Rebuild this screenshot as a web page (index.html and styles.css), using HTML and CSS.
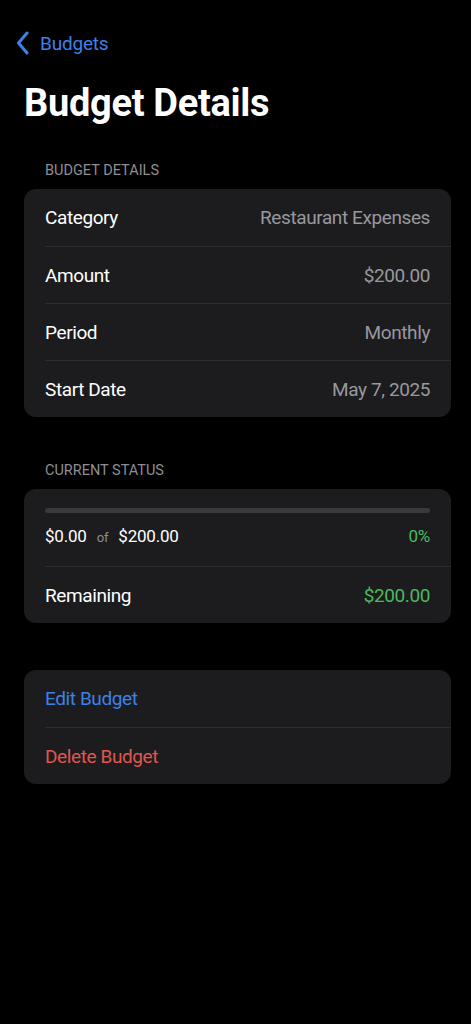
FILE: index.html
```html
<!DOCTYPE html>
<html lang="en">
<head>
  <meta charset="UTF-8">
  <meta name="viewport" content="width=device-width, initial-scale=1.0">
  <title>Budget Details</title>
  <link rel="stylesheet" href="styles.css">
</head>
<body>
  <header class="nav-bar">
    <a href="#" class="back-link">
      <svg class="chevron" width="14" height="24" viewBox="0 0 14 24">
        <path d="M11 2 L2.5 12 L11 22" fill="none" stroke="currentColor" stroke-width="3" stroke-linecap="round" stroke-linejoin="round"/>
      </svg>
      <span>Budgets</span>
    </a>
    <h1>Budget Details</h1>
  </header>

  <main>
    <!-- Detalhes -->
    <section class="group">
      <h2 class="group-title">BUDGET DETAILS</h2>
      <div class="card">
        <div class="row"><span class="label">Category</span><span class="value">Restaurant Expenses</span></div>
        <div class="row"><span class="label">Amount</span><span class="value">$200.00</span></div>
        <div class="row"><span class="label">Period</span><span class="value">Monthly</span></div>
        <div class="row"><span class="label">Start Date</span><span class="value">May 7, 2025</span></div>
      </div>
    </section>

    <!-- Status -->
    <section class="group">
      <h2 class="group-title">CURRENT STATUS</h2>
      <div class="card">
        <div class="row progress-row">
          <div class="progress"><div class="progress-fill" style="width: 0%"></div></div>
          <div class="progress-info">
            <span class="spent">$0.00 <small>of</small> $200.00</span>
            <span class="green percent">0%</span>
          </div>
        </div>
        <div class="row"><span class="label">Remaining</span><span class="green">$200.00</span></div>
      </div>
    </section>

    <!-- Ações -->
    <section class="group actions">
      <div class="card">
        <a href="#" class="row action edit">Edit Budget</a>
        <a href="#" class="row action delete">Delete Budget</a>
      </div>
    </section>
  </main>
</body>
</html>
```

FILE: styles.css
```css
* {
  margin: 0;
  padding: 0;
  box-sizing: border-box;
}

body {
  font-family: Roboto, "Liberation Sans", sans-serif;
  background-color: #000000;
  color: #ffffff;
}

a {
  text-decoration: none;
}

.nav-bar {
  padding: 30px 24px 0 16px;
}

.back-link {
  display: flex;
  align-items: center;
  gap: 10px;
  color: #3d82e8;
  font-size: 19px;
  letter-spacing: -0.2px;
  height: 26px;
}

.chevron {
  display: block;
}

.nav-bar h1 {
  font-size: 38px;
  font-weight: 700;
  margin: 23px 0 0 8px;
  line-height: 48px;
  letter-spacing: -0.3px;
}

main {
  padding: 0 20px 0 24px;
}

.group {
  margin-top: 35px;
}

.group + .group {
  margin-top: 45px;
}

.group.actions {
  margin-top: 47px;
}

.group-title {
  font-size: 14.5px;
  font-weight: 400;
  color: #8e8e93;
  padding-left: 21px;
  margin-bottom: 10px;
  line-height: 17px;
}

.card {
  background-color: #1c1c1e;
  border-radius: 12px;
  overflow: hidden;
}

.row {
  display: flex;
  justify-content: space-between;
  align-items: center;
  height: 57px;
  margin-left: 21px;
  padding-right: 21px;
  font-size: 19px;
  letter-spacing: -0.4px;
  border-top: 1px solid #2c2c2e;
}

.row:first-child {
  border-top: none;
}

.value {
  color: #98989e;
}

.green {
  color: #4cb860;
}

.progress-row {
  flex-direction: column;
  align-items: stretch;
  justify-content: flex-start;
  height: 77px;
  padding-top: 19px;
}

.progress {
  height: 5px;
  border-radius: 3px;
  background-color: #3a3a3c;
}

.progress-fill {
  height: 100%;
  border-radius: 3px;
  background-color: #4cb860;
}

.progress-info {
  display: flex;
  justify-content: space-between;
  align-items: center;
  margin-top: 13px;
  font-size: 17px;
  letter-spacing: -0.2px;
}

.spent small {
  font-size: 13px;
  color: #8e8e93;
  margin: 0 6px;
}

.action {
  justify-content: flex-start;
}

.edit {
  color: #3d82e8;
}

.delete {
  color: #e0574f;
}
```
